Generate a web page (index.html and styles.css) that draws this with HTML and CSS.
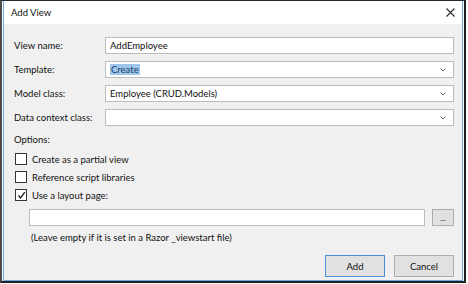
FILE: index.html
```html
<!DOCTYPE html>
<html>
<head>
<meta charset="utf-8">
<link rel="stylesheet" href="styles.css">
</head>
<body>
<div class="shot">
  <div class="window">
    <div class="titlebar">
      <span class="title">Add View</span>
      <svg class="close" width="9" height="9" viewBox="0 0 9 9"><path d="M0.5 0.5 L8.5 8.5 M8.5 0.5 L0.5 8.5" stroke="#2b2b2b" stroke-width="1.1" fill="none"/></svg>
    </div>
    <div class="body">
      <div class="fields">
        <label class="lbl">View name:</label>
        <div class="field"><span class="val">AddEmployee</span></div>
        <label class="lbl">Template:</label>
        <div class="field combo"><span class="val"><span class="sel">Create</span></span><svg class="arrow" width="6" height="4" viewBox="0 0 6 4"><path d="M0.5 0.5 L3 3 L5.5 0.5" stroke="#6d6d6d" fill="none" stroke-width="1"/></svg></div>
        <label class="lbl">Model class:</label>
        <div class="field combo"><span class="val">Employee (CRUD.Models)</span><svg class="arrow" width="6" height="4" viewBox="0 0 6 4"><path d="M0.5 0.5 L3 3 L5.5 0.5" stroke="#6d6d6d" fill="none" stroke-width="1"/></svg></div>
        <label class="lbl">Data context class:</label>
        <div class="field combo"><span class="val"></span><svg class="arrow" width="6" height="4" viewBox="0 0 6 4"><path d="M0.5 0.5 L3 3 L5.5 0.5" stroke="#6d6d6d" fill="none" stroke-width="1"/></svg></div>
      </div>
      <div class="options">Options:</div>
      <div class="check"><span class="box"></span><span>Create as a partial view</span></div>
      <div class="check"><span class="box"></span><span>Reference script libraries</span></div>
      <div class="check"><span class="box"><svg width="9" height="9" viewBox="0 0 9 9"><path d="M1.5 4.5 L3.5 7 L7.8 1.2" stroke="#1a1a1a" stroke-width="1.3" fill="none"/></svg></span><span>Use a layout page:</span></div>
      <div class="layout-row">
        <div class="field wide"></div>
        <div class="btn small">...</div>
      </div>
      <div class="hint">(Leave empty if it is set in a Razor _viewstart file)</div>
      <div class="actions">
        <div class="btn default">Add</div>
        <div class="btn">Cancel</div>
      </div>
    </div>
  </div>
</div>
</body>
</html>
```
FILE: styles.css
```css
html, body {
  margin: 0;
  padding: 0;
  background: #ffffff;
}
body {
  font-family: "Lato", "Open Sans", sans-serif;
  font-size: 9.5px;
  color: #111111;
}
.shot {
  width: 462px;
  height: 280px;
  border-top: 1px solid #2a2a2a;
  border-left: 2px solid #4a4a4a;
  border-right: 2px solid #1f1f1f;
  border-bottom: 2px solid #1f1f1f;
  display: flex;
}
.window {
  margin: 0 1px;
  flex: 1;
  border: 1px solid #6fa8dc;
  border-top: none;
  background: #f0f0f0;
  display: flex;
  flex-direction: column;
}
.titlebar {
  height: 23px;
  background: #ffffff;
  display: flex;
  align-items: center;
  justify-content: space-between;
  padding: 0 7px 0 7px;
}
.title {
  color: #111;
  line-height: 14px;
}
.body {
  padding: 13px 8px 0 10px;
  display: flex;
  flex-direction: column;
}
.fields {
  display: grid;
  grid-template-columns: 91px 1fr;
  row-gap: 7px;
  align-items: center;
}
.lbl {
  line-height: 14px;
}
.field {
  height: 15px;
  border: 1px solid #bcbcbc;
  background: #ffffff;
  display: flex;
  align-items: center;
  padding: 0 5px 0 4px;
}
.val {
  flex: 1;
  line-height: 13px;
  white-space: nowrap;
}
.sel {
  background: #9fc6ec;
  color: #183a66;
  padding: 0 1px;
}
.arrow {
  margin-right: 2px;
}
.options {
  margin-top: 7px;
  line-height: 14px;
}
.options + .check {
  margin-top: 3px;
}
.check {
  height: 18px;
  display: flex;
  align-items: center;
  gap: 5px;
  padding-left: 1px;
}
.box {
  width: 10px;
  height: 10px;
  border: 1px solid #333333;
  background: #ffffff;
  display: flex;
  align-items: center;
  justify-content: center;
}
.layout-row {
  margin-top: 5px;
  margin-left: 15px;
  display: flex;
  gap: 7px;
}
.wide {
  flex: 1;
}
.btn {
  background: #e1e1e1;
  border: 1px solid #adadad;
  display: flex;
  align-items: center;
  justify-content: center;
  color: #111;
}
.btn.small {
  width: 20px;
  height: 15px;
  font-size: 8px;
  line-height: 8px;
}
.hint {
  margin-top: 5px;
  margin-left: 17px;
  line-height: 14px;
}
.actions {
  margin-top: 10px;
  display: flex;
  justify-content: flex-end;
  gap: 9px;
}
.actions .btn {
  width: 58px;
  height: 20px;
}
.btn.default {
  border-color: #4a8fd8;
}
```
